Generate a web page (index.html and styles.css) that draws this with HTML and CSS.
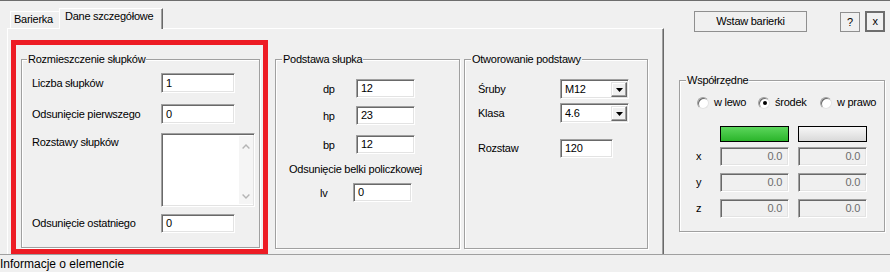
FILE: index.html
```html
<!DOCTYPE html>
<html lang="pl">
<head>
<meta charset="utf-8">
<title>Dane szczegółowe</title>
<link rel="stylesheet" href="styles.css">
</head>
<body>
<div class="window">
  <div class="main">
    <div class="tabctl">
      <div class="tabstrip">
        <div class="tab">Barierka</div>
        <div class="tab active">Dane szczegółowe</div>
      </div>
      <div class="panel">
        <div class="highlight">
          <fieldset class="group g-rozm">
            <legend class="lg5">Rozmieszczenie słupków</legend>
            <div class="gbody rozm-body">
              <div class="row r1"><span class="lbl">Liczba słupków</span><div class="edit e-rozm h20">1</div></div>
              <div class="row r2"><span class="lbl">Odsunięcie pierwszego</span><div class="edit e-rozm h20">0</div></div>
              <div class="row r3"><span class="lbl lbl-top">Rozstawy słupków</span>
                <div class="edit memo">
                  <div class="sb">
                    <svg width="8" height="5" viewBox="0 0 8 5"><path d="M0.6 4.4L4 1L7.4 4.4" stroke="#b4b4b4" stroke-width="1.4" fill="none"/></svg>
                    <svg width="8" height="5" viewBox="0 0 8 5"><path d="M0.6 0.6L4 4L7.4 0.6" stroke="#b4b4b4" stroke-width="1.4" fill="none"/></svg>
                  </div>
                </div>
              </div>
              <div class="row r4"><span class="lbl">Odsunięcie ostatniego</span><div class="edit e-rozm h19">0</div></div>
            </div>
          </fieldset>
        </div>

        <fieldset class="group g-pod">
          <legend>Podstawa słupka</legend>
          <div class="gbody pod-body">
            <div class="prow p-dp"><span class="plbl">dp</span><div class="edit e-pod">12</div></div>
            <div class="prow p-hp"><span class="plbl">hp</span><div class="edit e-pod">23</div></div>
            <div class="prow p-bp"><span class="plbl">bp</span><div class="edit e-pod">12</div></div>
            <div class="note">Odsunięcie belki policzkowej</div>
            <div class="prow p-lv"><span class="plbl">lv</span><div class="edit e-pod">0</div></div>
          </div>
        </fieldset>

        <fieldset class="group g-otw">
          <legend>Otworowanie podstawy</legend>
          <div class="gbody otw-body">
            <div class="orow o-sr"><span class="olbl">Śruby</span>
              <div class="edit combo"><span class="cval">M12</span><span class="dd"><svg width="7" height="4" viewBox="0 0 7 4"><path d="M0 0H7L3.5 4Z" fill="#000"/></svg></span></div>
            </div>
            <div class="orow o-kl"><span class="olbl">Klasa</span>
              <div class="edit combo"><span class="cval">4.6</span><span class="dd"><svg width="7" height="4" viewBox="0 0 7 4"><path d="M0 0H7L3.5 4Z" fill="#000"/></svg></span></div>
            </div>
            <div class="orow o-ro"><span class="olbl">Rozstaw</span><div class="edit e-roz">120</div></div>
          </div>
        </fieldset>
      </div>
    </div>

    <div class="side">
      <div class="btnrow">
        <div class="btn b-wstaw">Wstaw barierki</div>
        <div class="btn b-help">?</div>
        <div class="btn b-close">x</div>
      </div>
      <fieldset class="group g-wsp">
        <legend>Współrzędne</legend>
        <div class="gbody wsp-body">
          <div class="radios">
            <div class="ropt o1"><span class="radio"></span><span>w lewo</span></div>
            <div class="ropt o2"><span class="radio"><span class="dot"></span></span><span>środek</span></div>
            <div class="ropt o3"><span class="radio"></span><span>w prawo</span></div>
          </div>
          <div class="crow c-btn"><span class="clbl"></span><div class="cbtn green"></div><div class="cbtn grey"></div></div>
          <div class="crow c-x"><span class="clbl">x</span><div class="edit dis">0.0</div><div class="edit dis">0.0</div></div>
          <div class="crow c-y"><span class="clbl">y</span><div class="edit dis">0.0</div><div class="edit dis">0.0</div></div>
          <div class="crow c-z"><span class="clbl">z</span><div class="edit dis">0.0</div><div class="edit dis">0.0</div></div>
        </div>
      </fieldset>
    </div>
  </div>
  <div class="status">Informacje o elemencie</div>
</div>
</body>
</html>
```

FILE: styles.css
```css
* { box-sizing: border-box; }
html, body { margin: 0; padding: 0; }
body {
  width: 890px;
  height: 272px;
  overflow: hidden;
  background: #f0f0f0;
  font-family: "Liberation Sans", Arial, sans-serif;
  font-size: 11px;
  line-height: 13px;
  letter-spacing: -0.25px;
  color: #000;
}
.window {
  width: 890px;
  height: 272px;
  border-top: 1px solid #6d6d6d;
  display: flex;
  flex-direction: column;
}
.main { height: 253px; display: flex; }

/* tab control */
.tabctl { margin-left: 7px; width: 657px; display: flex; flex-direction: column; }
.tabstrip { height: 27px; display: flex; align-items: flex-end; padding-left: 3px; }
.tab {
  height: 17px;
  width: 49px;
  border-top: 1px solid #fff;
  border-left: 1px solid #fff;
  padding: 1px 0 0 3px;
  white-space: nowrap;
}
.tab.active {
  height: 21px;
  width: 104px;
  margin-bottom: -1px;
  position: relative;
  z-index: 1;
  background: #f0f0f0;
  border-right: 1px solid #696969;
  box-shadow: inset -1px 0 #a0a0a0;
  padding: 1px 0 0 5px;
}
.panel {
  height: 226px;
  border-top: 1px solid #fff;
  border-left: 1px solid #fff;
  border-right: 1px solid #696969;
  box-shadow: inset -1px 0 #a0a0a0;
  display: flex;
  align-items: flex-start;
  padding: 11px 0 0 3px;
}

/* red highlight */
.highlight {
  width: 257px;
  height: 214px;
  border: 5px solid #ed1c24;
  padding: 8px 3px 1px 5px;
  display: flex;
}

/* group boxes */
.group {
  margin: 0;
  padding: 0;
  min-width: 0;
  border: 1px solid #a0a0a0;
  box-shadow: inset 1px 1px #fff, 1px 1px #fff;
}
.group legend {
  padding: 0 1px;
  margin-left: 6px;
  line-height: 13px;
  background: #f0f0f0;
  white-space: nowrap;
}
.group legend.lg5 { margin-left: 5px; }
.g-rozm { flex: 1; }
.g-pod { width: 185px; height: 196px; margin-left: 7px; margin-top: 13px; }
.g-otw { width: 184px; height: 196px; margin-left: 4px; margin-top: 13px; }

/* edit boxes */
.edit {
  background: #fff;
  border: 1px solid;
  border-color: #a0a0a0 #fff #fff #a0a0a0;
  box-shadow: inset 1px 1px #696969, inset -1px -1px #e3e3e3;
  padding-left: 4px;
  white-space: nowrap;
}
.h20 { height: 20px; line-height: 18px; }
.h19 { height: 19px; line-height: 17px; }

/* Rozmieszczenie */
.rozm-body { padding: 7px 0 0 10px; }
.row { display: flex; align-items: center; }
.lbl { width: 129px; white-space: nowrap; }
.lbl-top { padding-top: 3px; }
.e-rozm { width: 74px; }
.r2 { margin-top: 11px; }
.r3 { margin-top: 9px; align-items: flex-start; }
.r4 { margin-top: 7px; }
.memo {
  width: 94px;
  height: 74px;
  display: flex;
  justify-content: flex-end;
  padding: 2px 1px 2px 0;
}
.sb {
  width: 14px;
  background: #f5f5f5;
  display: flex;
  flex-direction: column;
  justify-content: space-between;
  align-items: center;
  padding: 8px 0 5px;
}

/* Podstawa */
.pod-body { padding-top: 13px; }
.prow { display: flex; align-items: center; padding-left: 47px; }
.plbl { width: 33px; padding-top: 2px; }
.e-pod { width: 59px; height: 19px; line-height: 17px; }
.p-dp { margin-top: 0; }
.p-hp { margin-top: 8px; }
.p-bp { margin-top: 10px; }
.note { margin-top: 9px; padding-left: 13px; white-space: nowrap; }
.p-lv { margin-top: 7px; padding-left: 44px; }

/* Otworowanie */
.otw-body { padding: 13px 0 0 13px; }
.orow { display: flex; align-items: center; }
.olbl { width: 82px; }
.o-kl { margin-top: 4px; }
.o-ro { margin-top: 16px; }
.combo {
  width: 69px;
  height: 20px;
  display: flex;
  padding: 2px 1px 1px 0;
}
.cval { flex: 1; padding-left: 4px; line-height: 15px; }
.dd {
  width: 16px;
  background: #f0f0f0;
  border: 1px solid;
  border-color: #e3e3e3 #696969 #696969 #e3e3e3;
  box-shadow: inset -1px -1px #a0a0a0, inset 1px 1px #fff;
  display: flex;
  align-items: center;
  justify-content: center;
}
.e-roz { width: 53px; height: 19px; line-height: 17px; }

/* side */
.side { flex: 1; display: flex; flex-direction: column; }
.btnrow { display: flex; align-items: flex-start; margin-top: 10px; padding-left: 30px; }
.btn {
  height: 21px;
  border: 1px solid #8f8f8f;
  background: #f0f0f0;
  display: flex;
  align-items: center;
  justify-content: center;
}
.b-wstaw { width: 113px; }
.b-help { width: 20px; margin-left: 33px; height: 20px; margin-top: 1px; }
.b-close { width: 20px; margin-left: 5px; border: 2px solid #6d6d6d; }

.g-wsp { width: 206px; height: 158px; margin-left: 15px; margin-top: 42px; }
.wsp-body { padding-top: 9px; }
.radios { display: flex; align-items: center; padding-left: 17px; }
.ropt { display: flex; align-items: center; gap: 5px; white-space: nowrap; }
.o1 { width: 61px; }
.o2 { width: 62px; }
.radio {
  width: 12px;
  height: 12px;
  border-radius: 50%;
  background: #fff;
  border: 1px solid;
  border-color: #a0a0a0 #e3e3e3 #e3e3e3 #a0a0a0;
  box-shadow: inset 1px 1px #696969;
  display: flex;
  align-items: center;
  justify-content: center;
}
.dot { width: 4px; height: 4px; border-radius: 50%; background: #000; margin: 1px 0 0 1px; }

.crow { display: flex; gap: 9px; }
.clbl { width: 31px; padding-left: 16px; display: flex; align-items: center; }
.c-btn { margin-top: 17px; height: 16px; }
.c-x { margin-top: 5px; }
.c-y, .c-z { margin-top: 7px; }
.cbtn { width: 69px; height: 16px; border: 1px solid #000; }
.green { background: linear-gradient(#5cd65c, #2bb52b); }
.grey { background: linear-gradient(#f7f7f7, #d9d9d9); }
.dis {
  width: 69px;
  height: 19px;
  line-height: 17px;
  background: #f0f0f0;
  color: #6d6d6d;
  text-align: right;
  padding: 0 6px 0 0;
}

/* status */
.status {
  height: 18px;
  border-top: 1px solid #a0a0a0;
  font-size: 12px;
  line-height: 15px;
  padding-top: 2px;
  letter-spacing: 0;
  white-space: nowrap;
}
```
